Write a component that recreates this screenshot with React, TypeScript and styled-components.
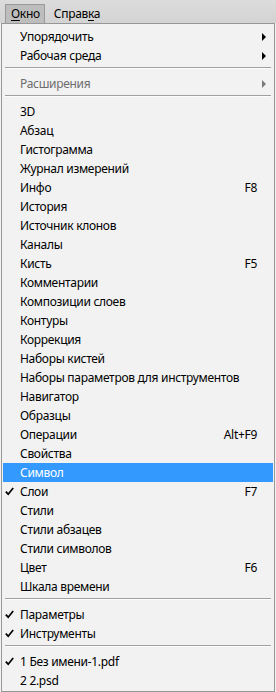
import React from "react";
import styled, { createGlobalStyle } from "styled-components";

const GlobalStyle = createGlobalStyle`
  html, body { margin: 0; padding: 0; background: #f2f2f2; }
  body { font-family: "Segoe UI", "Noto Sans", "Liberation Sans", sans-serif; font-size: 12px; letter-spacing: -0.3px; color: #000; }
  * { box-sizing: border-box; }
`;

const Page = styled.div`
  width: 276px;
  height: 692px;
  display: flex;
  flex-direction: column;
  overflow: hidden;
  background: #f2f2f2;
`;

const MenuBar = styled.div`
  height: 23px;
  flex: none;
  display: flex;
  align-items: stretch;
  padding: 4px 0 0 5px;
  gap: 3px;
  background: linear-gradient(#dcdcdc, #d3d3d3);
`;

const BarItem = styled.div<{ $active?: boolean }>`
  padding: 0 4px 0 5px;
  display: flex;
  align-items: center;
  line-height: 18px;
  border: 1px solid ${(p) => (p.$active ? "#9a9a9a" : "transparent")};
  border-bottom: none;
  background: ${(p) => (p.$active ? "#bdbdbd" : "transparent")};
  u { text-decoration: underline; text-underline-offset: 2px; }
`;

const Dropdown = styled.div`
  margin-left: 1px;
  width: 274px;
  flex: 1;
  border: 1px solid #979797;
  background: #f2f2f2;
  padding: 3px 1px 1px 1px;
  display: flex;
  flex-direction: column;
`;

const Item = styled.div<{ $selected?: boolean; $disabled?: boolean }>`
  position: relative;
  height: 19px;
  flex: none;
  display: flex;
  align-items: center;
  padding: 0 16px 0 17px;
  line-height: 19px;
  white-space: nowrap;
  background: ${(p) => (p.$selected ? "#3399ff" : "transparent")};
  color: ${(p) => (p.$selected ? "#fff" : p.$disabled ? "#6d6d6d" : "#000")};
`;

const Label = styled.span`
  flex: 1;
  margin-top: -1px;
`;

const Shortcut = styled.span`
  margin-top: -1px;
`;

const CheckBox = styled.span`
  position: absolute;
  left: 2px;
  top: 5px;
  width: 9px;
  height: 9px;
  display: flex;
`;

const Arrow = styled.span<{ $disabled?: boolean }>`
  position: absolute;
  right: 7px;
  top: 6px;
  width: 0;
  height: 0;
  border-top: 4px solid transparent;
  border-bottom: 4px solid transparent;
  border-left: 4px solid ${(p) => (p.$disabled ? "#7a7a7a" : "#000")};
`;

const Separator = styled.div`
  height: 9px;
  flex: none;
  padding: 2px 2px 0 2px;
  &::before {
    content: "";
    display: block;
    height: 1px;
    background: #a0a0a0;
    box-shadow: 0 1px 0 #fdfdfd;
  }
`;

type Entry =
  | { sep: true }
  | {
      sep?: false;
      label: string;
      shortcut?: string;
      sub?: boolean;
      checked?: boolean;
      selected?: boolean;
      disabled?: boolean;
    };

const entries: Entry[] = [
  { label: "Упорядочить", sub: true },
  { label: "Рабочая среда", sub: true },
  { sep: true },
  { label: "Расширения", sub: true, disabled: true },
  { sep: true },
  { label: "3D" },
  { label: "Абзац" },
  { label: "Гистограмма" },
  { label: "Журнал измерений" },
  { label: "Инфо", shortcut: "F8" },
  { label: "История" },
  { label: "Источник клонов" },
  { label: "Каналы" },
  { label: "Кисть", shortcut: "F5" },
  { label: "Комментарии" },
  { label: "Композиции слоев" },
  { label: "Контуры" },
  { label: "Коррекция" },
  { label: "Наборы кистей" },
  { label: "Наборы параметров для инструментов" },
  { label: "Навигатор" },
  { label: "Образцы" },
  { label: "Операции", shortcut: "Alt+F9" },
  { label: "Свойства" },
  { label: "Символ", selected: true },
  { label: "Слои", shortcut: "F7", checked: true },
  { label: "Стили" },
  { label: "Стили абзацев" },
  { label: "Стили символов" },
  { label: "Цвет", shortcut: "F6" },
  { label: "Шкала времени" },
  { sep: true },
  { label: "Параметры", checked: true },
  { label: "Инструменты", checked: true },
  { sep: true },
  { label: "1 Без имени-1.pdf", checked: true },
  { label: "2 2.psd" },
];

const Check = () => (
  <svg width="9" height="9" viewBox="0 0 9 9">
    <path d="M0.8 4.6 L3.2 7.2 L8.2 1" fill="none" stroke="#000" strokeWidth="1.7" />
  </svg>
);

export default function App() {
  return (
    <Page>
      <GlobalStyle />
      <MenuBar>
        <BarItem $active>
          <span>
            <u>О</u>кно
          </span>
        </BarItem>
        <BarItem>
          <span>
            Справ<u>к</u>а
          </span>
        </BarItem>
      </MenuBar>
      <Dropdown>
        {entries.map((e, i) =>
          e.sep ? (
            <Separator key={i} />
          ) : (
            <Item key={i} $selected={e.selected} $disabled={e.disabled}>
              {e.checked && (
                <CheckBox>
                  <Check />
                </CheckBox>
              )}
              <Label>{e.label}</Label>
              {e.shortcut && <Shortcut>{e.shortcut}</Shortcut>}
              {e.sub && <Arrow $disabled={e.disabled} />}
            </Item>
          )
        )}
      </Dropdown>
    </Page>
  );
}
